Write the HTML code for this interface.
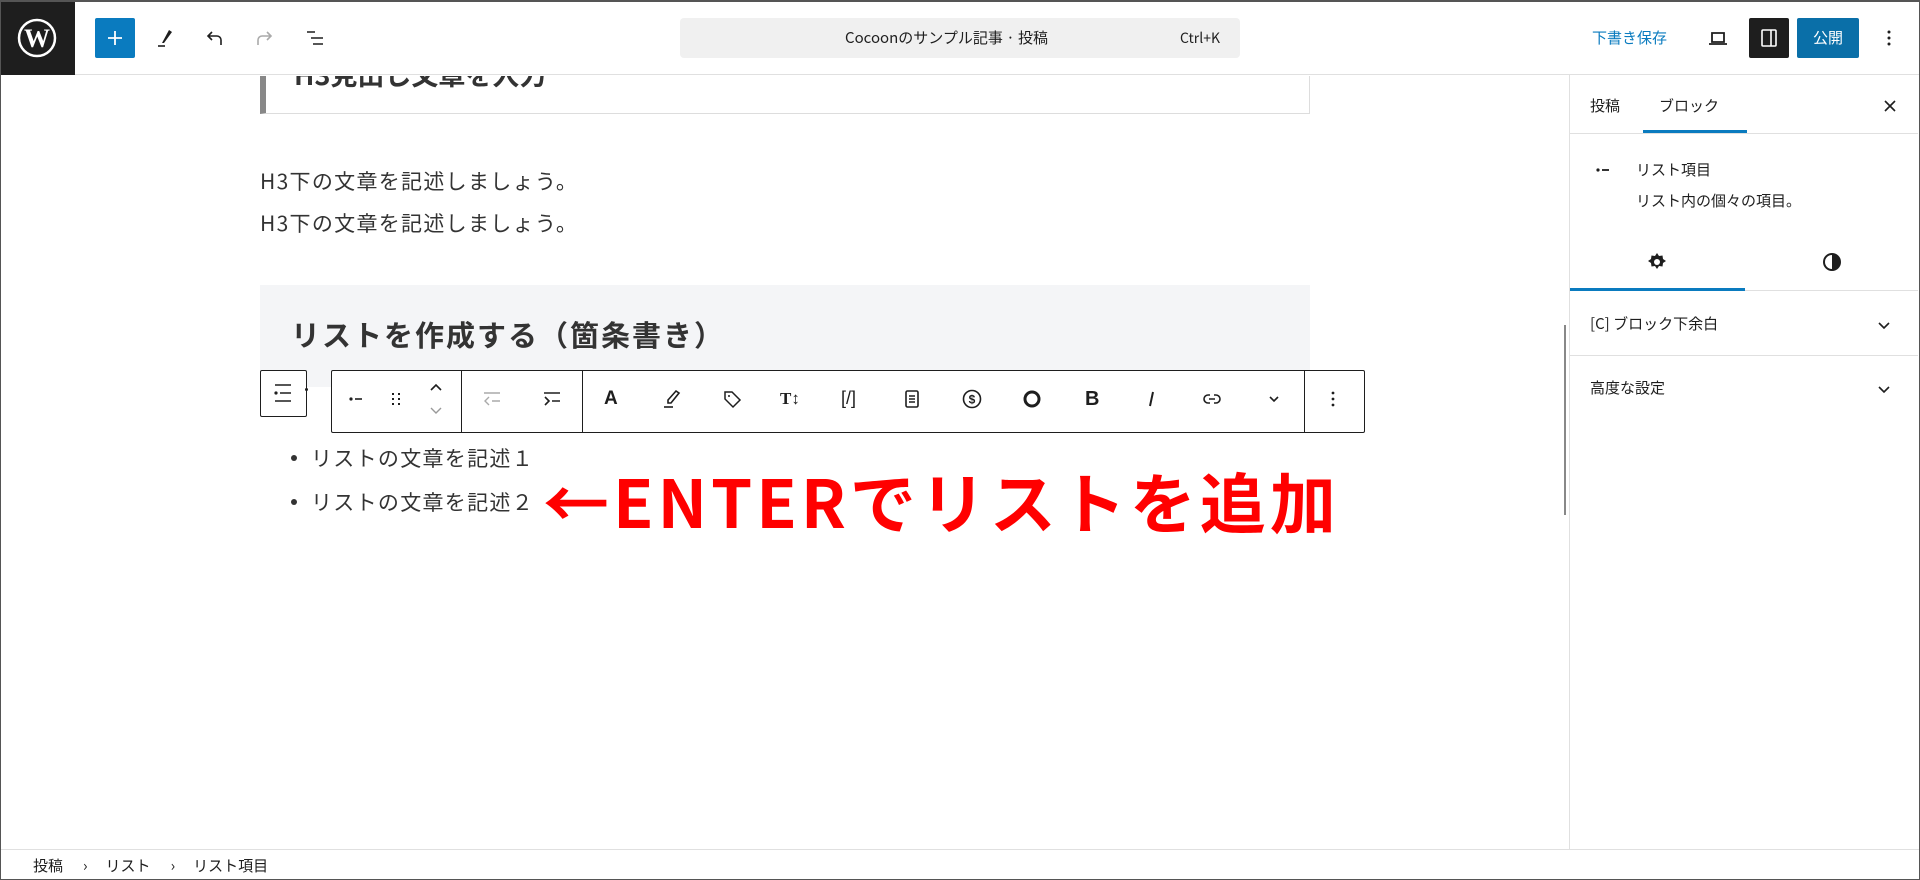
<!DOCTYPE html>
<html><head><meta charset="utf-8"><style>
*{margin:0;padding:0;box-sizing:border-box}
body{width:1920px;height:880px;overflow:hidden;background:#fff;font-family:"Noto Sans CJK JP","Liberation Sans",sans-serif;color:#1e1e1e;position:relative}
.a{position:absolute}
.frame{position:absolute;left:0;top:0;width:1920px;height:880px;border:1px solid #555;border-top:2px solid #555;pointer-events:none;z-index:50}
svg{display:block}
.ic{position:absolute;top:387px;width:24px;height:24px;margin-left:-12px}
</style></head><body>
<div class="frame"></div>
<!-- top bar -->
<div class="a" style="left:0;top:0;width:1920px;height:75px;border-bottom:1px solid #e0e0e0;background:#fff"></div>
<div class="a" style="left:0;top:0;width:75px;height:75px;background:#1e1e1e"></div>
<svg class="a" style="left:17px;top:18px" width="40" height="40" viewBox="0 0 40 40"><circle cx="20" cy="20" r="18" fill="none" stroke="#fff" stroke-width="2.5"/><text x="20" y="29" font-family="Liberation Serif,serif" font-size="26" font-weight="bold" fill="#fff" text-anchor="middle">W</text></svg>
<div class="a" style="left:95px;top:18px;width:40px;height:40px;background:#0a7bbf;border-radius:2px"></div>
<svg class="a" style="left:103px;top:26px" width="24" height="24"><path d="M12 5v14M5 12h14" stroke="#fff" stroke-width="1.8"/></svg>
<svg class="a" style="left:153px;top:26px" width="24" height="24"><path d="M16 4l3 2-8 11-2 0z" fill="#1e1e1e"/><path d="M5 20h7" stroke="#1e1e1e" stroke-width="1.6"/></svg>
<svg class="a" style="left:203px;top:26px" width="24" height="24"><path d="M18 19v-5a4 4 0 0 0-4-4H6M9 6L5 10l4 4" fill="none" stroke="#1e1e1e" stroke-width="1.6"/></svg>
<svg class="a" style="left:252px;top:26px" width="24" height="24"><path d="M6 19v-5a4 4 0 0 1 4-4h8M15 6l4 4-4 4" fill="none" stroke="#aaa" stroke-width="1.6"/></svg>
<svg class="a" style="left:303px;top:26px" width="24" height="24"><path d="M4 6h8M8 12h12M10 18h10" stroke="#1e1e1e" stroke-width="1.6"/></svg>
<div class="a" style="left:680px;top:18px;width:560px;height:40px;background:#f0f0f0;border-radius:4px"></div>
<div class="a" style="left:845px;top:18px;line-height:40px;font-size:15px;color:#1e1e1e;white-space:nowrap">Cocoonのサンプル記事 · 投稿</div>
<div class="a" style="left:1180px;top:18px;line-height:40px;font-size:14px;color:#1e1e1e">Ctrl+K</div>
<div class="a" style="left:1592px;top:18px;line-height:40px;font-size:15px;color:#0a7bbf">下書き保存</div>
<svg class="a" style="left:1706px;top:26px" width="24" height="24"><path d="M6 7h12v9H6zM3 18h18" fill="none" stroke="#1e1e1e" stroke-width="1.8"/></svg>
<div class="a" style="left:1749px;top:18px;width:40px;height:40px;background:#1e1e1e;border-radius:2px"></div>
<svg class="a" style="left:1757px;top:26px" width="24" height="24"><rect x="5" y="4" width="14" height="16" rx="1" fill="none" stroke="#fff" stroke-width="1.6"/><path d="M14 4v16" stroke="#fff" stroke-width="1.6"/></svg>
<div class="a" style="left:1797px;top:18px;width:62px;height:40px;background:#0a6fa8;border-radius:2px;color:#fff;font-size:15px;line-height:40px;text-align:center">公開</div>
<svg class="a" style="left:1877px;top:26px" width="24" height="24"><circle cx="12" cy="6" r="1.5" fill="#1e1e1e"/><circle cx="12" cy="12" r="1.5" fill="#1e1e1e"/><circle cx="12" cy="18" r="1.5" fill="#1e1e1e"/></svg>

<!-- content -->
<div class="a" style="left:260px;top:76px;width:1050px;height:38px;border-right:1px solid #ddd;border-bottom:1px solid #ddd;border-left:6px solid #888;overflow:hidden">
<div class="a" style="left:28px;top:-22px;font-size:27px;line-height:40px;font-weight:bold;color:#333;white-space:nowrap">H3見出し文章を入力</div></div>
<div class="a" style="left:260px;top:160px;font-size:21px;line-height:42px;color:#333;letter-spacing:1.3px">H3下の文章を記述しましょう。<br>H3下の文章を記述しましょう。</div>
<div class="a" style="left:260px;top:285px;width:1050px;height:102px;background:#f4f5f7"></div>
<div class="a" style="left:291px;top:312px;font-size:29px;line-height:44px;font-weight:bold;color:#333;white-space:nowrap;letter-spacing:2px">リストを作成する（箇条書き）</div>
<!-- toolbar -->
<div class="a" style="left:260px;top:370px;width:47px;height:47px;border:1px solid #1e1e1e;border-radius:2px;background:#fff"></div>
<svg class="a" style="left:271px;top:381px" width="24" height="24"><path d="M4 4h16M9 12h11M4 20h16" stroke="#1e1e1e" stroke-width="1.6"/><circle cx="5" cy="12" r="1.6" fill="#1e1e1e"/></svg>
<div class="a" style="left:305px;top:388px;width:3px;height:3px;background:#1e1e1e;border-radius:50%"></div>
<div class="a" style="left:331px;top:370px;width:1034px;height:63px;border:1px solid #1e1e1e;border-radius:2px;background:#fff"></div>
<div class="a" style="left:461px;top:370px;width:1px;height:63px;background:#1e1e1e"></div>
<div class="a" style="left:582px;top:370px;width:1px;height:63px;background:#1e1e1e"></div>
<div class="a" style="left:1304px;top:370px;width:1px;height:63px;background:#1e1e1e"></div>
<svg class="ic" style="left:356px" viewBox="0 0 24 24"><circle cx="7" cy="12" r="1.6" fill="#1e1e1e"/><path d="M11 12h7" stroke="#1e1e1e" stroke-width="1.6"/></svg>
<svg class="ic" style="left:396px" viewBox="0 0 24 24"><g fill="#1e1e1e"><rect x="8" y="6" width="2" height="2"/><rect x="14" y="6" width="2" height="2"/><rect x="8" y="11" width="2" height="2"/><rect x="14" y="11" width="2" height="2"/><rect x="8" y="16" width="2" height="2"/><rect x="14" y="16" width="2" height="2"/></g></svg>
<svg class="a" style="left:424px;top:378px" width="24" height="44"><path d="M7 12l5-5 5 5" fill="none" stroke="#1e1e1e" stroke-width="1.6"/><path d="M7 30l5 5 5-5" fill="none" stroke="#999" stroke-width="1.4"/></svg>
<svg class="ic" style="left:492px" viewBox="0 0 24 24"><path d="M4 6h16M12 14h8M9 10l-4 4 4 4" fill="none" stroke="#aaa" stroke-width="1.4"/></svg>
<svg class="ic" style="left:552px" viewBox="0 0 24 24"><path d="M4 6h16M12 14h8M5 10l4 4-4 4" fill="none" stroke="#1e1e1e" stroke-width="1.6"/></svg>
<div class="a" style="left:604px;top:387px;font-size:19px;font-weight:bold;line-height:24px;font-family:'Liberation Sans',sans-serif">A</div>
<svg class="ic" style="left:671px" viewBox="0 0 24 24"><path d="M17 4l3 2-8 10h-3v-3z" fill="none" stroke="#1e1e1e" stroke-width="1.6"/><path d="M5 20h9" stroke="#1e1e1e" stroke-width="1.6"/></svg>
<svg class="ic" style="left:732px" viewBox="0 0 24 24"><path d="M5 5h7l8 8-7 7-8-8z" fill="none" stroke="#1e1e1e" stroke-width="1.5"/><circle cx="9" cy="9" r="1" fill="#1e1e1e"/></svg>
<div class="a" style="left:780px;top:387px;font-size:17px;font-weight:bold;line-height:24px;font-family:'Liberation Serif',serif">T↕</div>
<div class="a" style="left:841px;top:386px;font-size:18px;line-height:24px;font-family:'Liberation Sans',sans-serif">[/]</div>
<svg class="ic" style="left:912px" viewBox="0 0 24 24"><rect x="6" y="4" width="12" height="16" rx="1.5" fill="none" stroke="#1e1e1e" stroke-width="1.6"/><path d="M9 9h6M9 12h6M9 15h6" stroke="#1e1e1e" stroke-width="1.4"/></svg>
<svg class="ic" style="left:972px" viewBox="0 0 24 24"><circle cx="12" cy="12" r="8.5" fill="none" stroke="#1e1e1e" stroke-width="1.6"/><text x="12" y="16.5" font-size="12" font-weight="bold" text-anchor="middle" fill="#1e1e1e" font-family="Liberation Sans">$</text></svg>
<svg class="ic" style="left:1032px" viewBox="0 0 24 24"><circle cx="12" cy="12" r="7" fill="none" stroke="#1e1e1e" stroke-width="3"/></svg>
<div class="a" style="left:1085px;top:387px;font-size:20px;font-weight:bold;line-height:24px;font-family:'Liberation Sans',sans-serif">B</div>
<svg class="ic" style="left:1152px" viewBox="0 0 24 24"><path d="M13 5l-3 14" stroke="#1e1e1e" stroke-width="2"/></svg>
<svg class="ic" style="left:1212px" viewBox="0 0 24 24"><path d="M10 8H8a4 4 0 0 0 0 8h2M14 8h2a4 4 0 0 1 0 8h-2M9 12h6" fill="none" stroke="#1e1e1e" stroke-width="1.6"/></svg>
<svg class="ic" style="left:1274px" viewBox="0 0 24 24"><path d="M8 10l4 4 4-4" fill="none" stroke="#1e1e1e" stroke-width="1.6"/></svg>
<svg class="ic" style="left:1333px" viewBox="0 0 24 24"><circle cx="12" cy="6" r="1.4" fill="#1e1e1e"/><circle cx="12" cy="12" r="1.4" fill="#1e1e1e"/><circle cx="12" cy="18" r="1.4" fill="#1e1e1e"/></svg>
<!-- list -->
<div class="a" style="left:291px;top:455px;width:6px;height:6px;border-radius:50%;background:#333"></div>
<div class="a" style="left:291px;top:499px;width:6px;height:6px;border-radius:50%;background:#333"></div>
<div class="a" style="left:311px;top:436px;font-size:21px;line-height:44px;color:#333;letter-spacing:1.3px">リストの文章を記述１<br>リストの文章を記述２</div>
<div class="a" style="left:543px;top:460px;font-size:66px;line-height:80px;font-weight:bold;color:#f00;white-space:nowrap;font-family:'Noto Sans CJK JP',sans-serif;letter-spacing:4px">←ENTERでリストを追加</div>

<!-- sidebar -->
<div class="a" style="left:1569px;top:75px;width:1px;height:774px;background:#e0e0e0"></div>
<div class="a" style="left:1564px;top:325px;width:2px;height:190px;background:#888"></div>
<div class="a" style="left:1570px;top:133px;width:348px;height:1px;background:#e0e0e0"></div>
<div class="a" style="left:1590px;top:94px;font-size:15px;line-height:24px">投稿</div>
<div class="a" style="left:1659px;top:94px;font-size:15px;line-height:24px">ブロック</div>
<div class="a" style="left:1643px;top:130px;width:104px;height:3px;background:#0a7bbf"></div>
<svg class="a" style="left:1878px;top:94px" width="24" height="24"><path d="M7 7l10 10M17 7L7 17" stroke="#1e1e1e" stroke-width="1.6"/></svg>
<svg class="a" style="left:1592px;top:158px" width="24" height="24"><circle cx="6" cy="12" r="1.6" fill="#1e1e1e"/><path d="M10 12h7" stroke="#1e1e1e" stroke-width="1.8"/></svg>
<div class="a" style="left:1636px;top:158px;font-size:15px;line-height:24px">リスト項目</div>
<div class="a" style="left:1636px;top:189px;font-size:15px;line-height:24px">リスト内の個々の項目。</div>
<svg class="a" style="left:1645px;top:250px" width="24" height="24"><path d="M12 3l2 3 3.5-.5 .5 3.5 3 2-3 2-.5 3.5-3.5-.5-2 3-2-3-3.5.5-.5-3.5-3-2 3-2 .5-3.5 3.5.5z" fill="#1e1e1e"/><circle cx="12" cy="12" r="3" fill="#fff"/></svg>
<svg class="a" style="left:1820px;top:250px" width="24" height="24"><circle cx="12" cy="12" r="8" fill="none" stroke="#1e1e1e" stroke-width="2"/><path d="M12 4a8 8 0 0 1 0 16z" fill="#1e1e1e"/></svg>
<div class="a" style="left:1570px;top:290px;width:348px;height:1px;background:#e0e0e0"></div>
<div class="a" style="left:1570px;top:288px;width:175px;height:3px;background:#0a7bbf"></div>
<div class="a" style="left:1590px;top:312px;font-size:15px;line-height:24px">[C] ブロック下余白</div>
<svg class="a" style="left:1872px;top:313px" width="24" height="24"><path d="M7 10l5 5 5-5" fill="none" stroke="#1e1e1e" stroke-width="1.6"/></svg>
<div class="a" style="left:1570px;top:355px;width:348px;height:1px;background:#e0e0e0"></div>
<div class="a" style="left:1590px;top:376px;font-size:15px;line-height:24px">高度な設定</div>
<svg class="a" style="left:1872px;top:377px" width="24" height="24"><path d="M7 10l5 5 5-5" fill="none" stroke="#1e1e1e" stroke-width="1.6"/></svg>

<!-- footer -->
<div class="a" style="left:0;top:849px;width:1920px;height:1px;background:#e0e0e0"></div>
<div class="a" style="left:33px;top:854px;font-size:15px;line-height:24px;white-space:nowrap">投稿<span style="margin:0 18px 0 20px">›</span>リスト<span style="margin:0 18px 0 20px">›</span>リスト項目</div>
</body></html>
